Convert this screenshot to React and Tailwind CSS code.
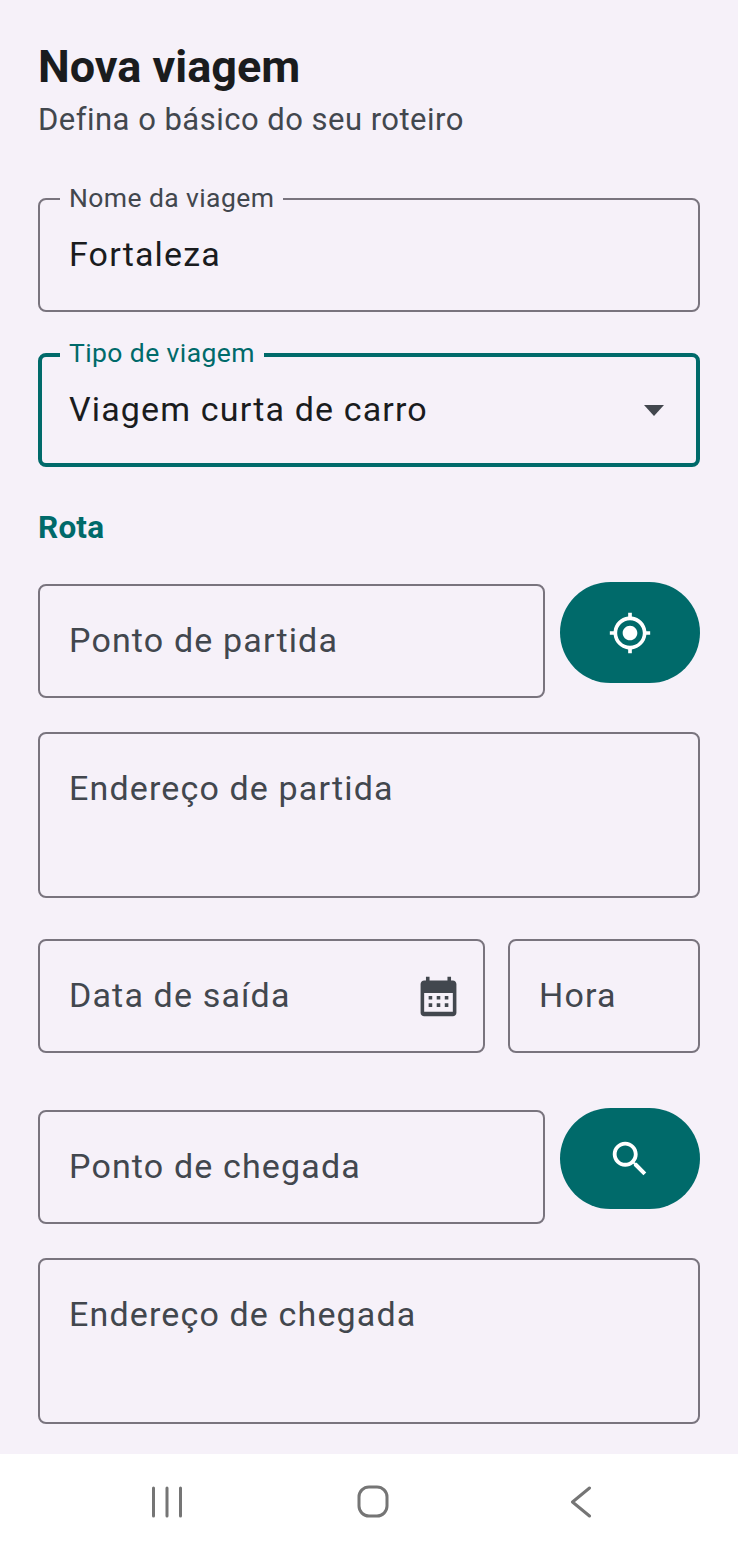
const FONT = { fontFamily: "Roboto, sans-serif" };

function Field({ label, value, placeholder, focused, tall, className = "", children }) {
  const border = focused ? "border-[4px] border-[#006a6a]" : "border-2 border-[#79747e]";
  return (
    <div className={`relative rounded-[8px] ${border} ${tall ? "h-[166px]" : "h-[114px]"} ${className}`}>
      {label && (
        <span
          className={`absolute bg-[#f6f1f9] px-[9px] text-[26.5px] leading-[30px] tracking-[0.4px] ${focused ? "left-[18px] top-[-19px] text-[#006a6a]" : "left-[20px] top-[-17px] text-[#42474e]"}`}
        >
          {label}
        </span>
      )}
      <div
        className={`flex ${tall ? "items-start pt-[32px]" : "items-center pb-[2px]"} h-full ${focused ? "pl-[27px] pr-[24px]" : "pl-[29px] pr-[26px]"} text-[34px] leading-[44px] tracking-[1.15px] ${value ? "text-[#1a1c1e]" : "text-[#42474e]"}`}
      >
        <span className="flex-1 whitespace-nowrap">{value || placeholder}</span>
        {children}
      </div>
    </div>
  );
}

function RoundButton({ children }) {
  return (
    <button className="mt-[-2px] flex h-[101px] w-[140px] shrink-0 items-center justify-center rounded-full bg-[#006a6a]">
      {children}
    </button>
  );
}

export default function App() {
  return (
    <div className="flex h-[1546px] w-[738px] flex-col overflow-hidden bg-[#f6f1f9]" style={FONT}>
      <main className="flex-1 px-[38px] pt-[41px]">
        <h1 className="text-[45px] font-bold leading-[52px] text-[#1a1c1e]">Nova viagem</h1>
        <p className="mt-[7px] text-[31px] leading-[40px] tracking-[0.48px] text-[#42474e]">
          Defina o básico do seu roteiro
        </p>

        <Field label="Nome da viagem" value="Fortaleza" className="mt-[58px] w-[662px]" />
        <Field
          label="Tipo de viagem"
          value="Viagem curta de carro"
          focused
          className="mt-[41px] w-[662px]"
        >
          <svg width="20" height="11" viewBox="0 0 20 11" className="mr-[8px] mt-[2px]">
            <path d="M0 0h20L10 11z" fill="#42474e" />
          </svg>
        </Field>

        <h2 className="mt-[43px] text-[31.5px] font-bold leading-[36px] tracking-[0.2px] text-[#006a6a]">Rota</h2>

        <div className="mt-[38px] flex items-start gap-[15px]">
          <Field placeholder="Ponto de partida" className="w-[507px]" />
          <RoundButton>
            <svg width="44" height="44" viewBox="0 0 24 24" fill="#ffffff">
              <path d="M12 8c-2.21 0-4 1.79-4 4s1.79 4 4 4 4-1.79 4-4-1.79-4-4-4zm8.94 3c-.46-4.17-3.77-7.48-7.94-7.94V1h-2v2.06C6.83 3.52 3.52 6.83 3.06 11H1v2h2.06c.46 4.17 3.77 7.48 7.94 7.94V23h2v-2.06c4.17-.46 7.48-3.77 7.94-7.94H23v-2h-2.06zM12 19c-3.87 0-7-3.13-7-7s3.13-7 7-7 7 3.13 7 7-3.13 7-7 7z" />
            </svg>
          </RoundButton>
        </div>

        <Field placeholder="Endereço de partida" tall className="mt-[34px] w-[662px]" />

        <div className="mt-[41px] flex gap-[23px]">
          <Field placeholder="Data de saída" className="w-[447px]">
            <svg width="43" height="43" viewBox="0 0 24 24" fill="#42474e" className="mr-[-3px] mt-[2px]">
              <path
                fillRule="evenodd"
                d="M20 3h-1V1h-2v2H7V1H5v2H4c-1.1 0-2 .9-2 2v16c0 1.1.9 2 2 2h16c1.1 0 2-.9 2-2V5c0-1.1-.9-2-2-2zm0 17.5H4V10h16v10.5z"
              />
              <path d="M6.5 11.7h2v2h-2zM11 11.7h2v2h-2zM15.5 11.7h2v2h-2zM6.5 15.8h2v2h-2zM11 15.8h2v2h-2zM15.5 15.8h2v2h-2z" />
            </svg>
          </Field>
          <Field placeholder="Hora" className="w-[192px]" />
        </div>

        <div className="mt-[57px] flex items-start gap-[15px]">
          <Field placeholder="Ponto de chegada" className="w-[507px]" />
          <RoundButton>
            <svg width="46" height="46" viewBox="0 0 24 24" fill="#ffffff">
              <path d="M15.5 14h-.79l-.28-.27C15.41 12.59 16 11.11 16 9.5 16 5.91 13.09 3 9.5 3S3 5.91 3 9.5 5.91 16 9.5 16c1.61 0 3.09-.59 4.23-1.57l.27.28v.79l5 4.99L20.49 19l-4.99-5zm-6 0C7.01 14 5 11.99 5 9.5S7.01 5 9.5 5 14 7.01 14 9.5 11.99 14 9.5 14z" />
            </svg>
          </RoundButton>
        </div>

        <Field placeholder="Endereço de chegada" tall className="mt-[34px] w-[662px]" />
      </main>

      <nav className="flex h-[92px] shrink-0 items-center justify-between bg-white pl-[150px] pr-[146px] pt-[3px]">
        <svg width="34" height="32" viewBox="0 0 34 32" fill="none" stroke="#757575" strokeWidth="3" strokeLinecap="round">
          <path d="M3.5 2v28M17 2v28M30.5 2v28" />
        </svg>
        <svg width="32" height="33" viewBox="0 0 32 33" fill="none" stroke="#757575" strokeWidth="3" className="mr-[8px]">
          <rect x="2" y="2" width="28" height="29" rx="10" />
        </svg>
        <svg width="22" height="32" viewBox="0 0 22 32" fill="none" stroke="#757575" strokeWidth="3" strokeLinecap="round" strokeLinejoin="round">
          <path d="M19.5 2 2.5 16l17 14" />
        </svg>
      </nav>
    </div>
  );
}
